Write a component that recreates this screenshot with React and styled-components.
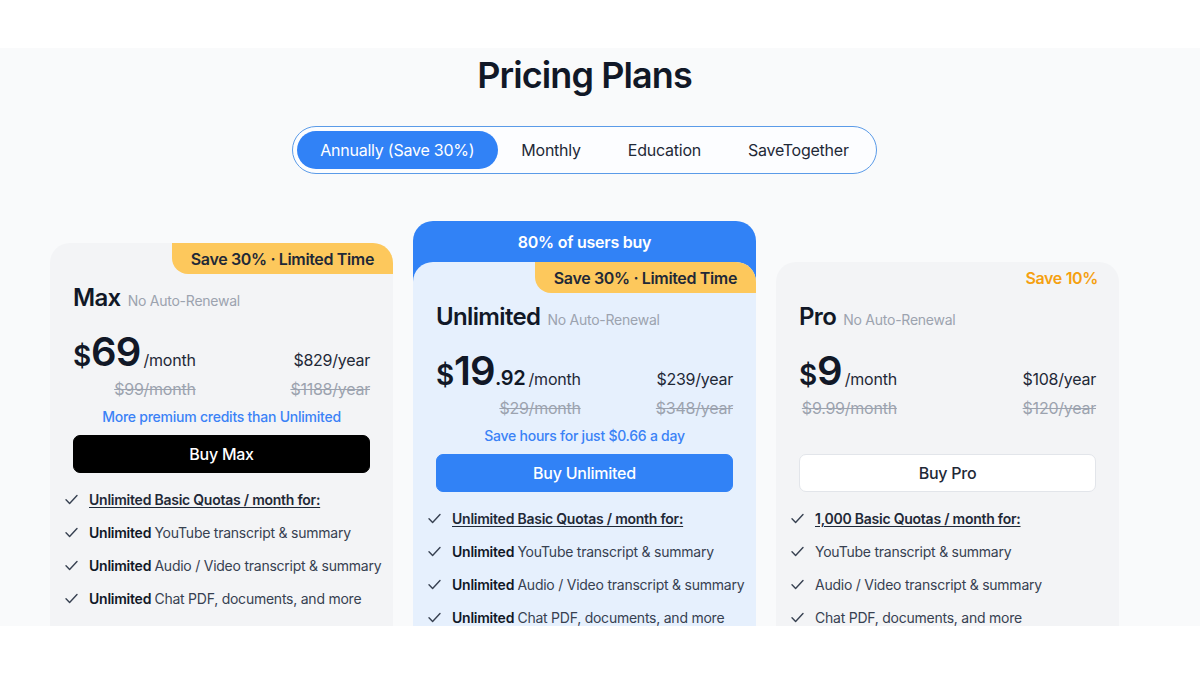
import React from 'react'
import styled, { createGlobalStyle } from 'styled-components'

const GlobalStyle = createGlobalStyle`
  body {
    margin: 0;
    background: #ffffff;
    font-family: Inter, "Noto Sans", sans-serif;
    letter-spacing: -0.015em;
  }
  * { box-sizing: border-box; }
`

const Page = styled.div`
  padding-top: 48px;
`

const Section = styled.section`
  height: 578px;
  overflow: hidden;
  background: #f9fafb;
  padding-right: 31px;
  display: flex;
  flex-direction: column;
  align-items: center;
`

const Title = styled.h1`
  margin: 5px 0 0;
  font-size: 36px;
  line-height: 44px;
  font-weight: 600;
  letter-spacing: -0.025em;
  color: #111827;
`

const Toggle = styled.div`
  margin-top: 29px;
  display: flex;
  padding: 4px;
  border: 1px solid #5b9be8;
  border-radius: 999px;
  background: #fcfdff;
`

const Tab = styled.button`
  height: 38px;
  padding: 0 23.5px;
  border: 0;
  border-radius: 999px;
  font-family: inherit;
  font-size: 16px;
  letter-spacing: inherit;
  cursor: pointer;
  background: ${p => (p.$active ? '#3182f6' : 'transparent')};
  color: ${p => (p.$active ? '#ffffff' : '#1f2937')};
`

const Cards = styled.div`
  margin-top: 47px;
  display: flex;
  gap: 20px;
  align-items: flex-start;
`

const Card = styled.div`
  width: 343px;
  min-height: 600px;
  margin-top: ${p => p.$offset || 0}px;
  background: ${p => p.$bg || '#f3f4f6'};
  border-radius: 20px 20px 0 0;
`

const Popular = styled.div`
  width: 343px;
  background: #3182f6;
  border-radius: 20px 20px 0 0;
`

const PopularHead = styled.div`
  height: 41px;
  display: flex;
  align-items: center;
  justify-content: center;
  color: #ffffff;
  font-size: 16px;
  font-weight: 600;
`

const BadgeRow = styled.div`
  display: flex;
  justify-content: flex-end;
  height: 31px;
`

const Badge = styled.div`
  padding: 0 ${p => (p.$plain ? 21 : 19)}px;
  display: flex;
  align-items: center;
  font-size: 16px;
  font-weight: 600;
  letter-spacing: -0.022em;
  color: ${p => (p.$plain ? '#f5a00f' : '#1f2937')};
  background: ${p => (p.$plain ? 'transparent' : '#fdc85c')};
  border-radius: 0 20px 0 16px;
`

const Body = styled.div`
  padding: 0 23px;
`

const Header = styled.div`
  margin-top: 8px;
  height: 32px;
  display: flex;
  align-items: baseline;
  gap: 7px;
`

const Name = styled.span`
  font-size: 24px;
  line-height: 32px;
  font-weight: 600;
  letter-spacing: -0.027em;
  color: #111827;
`

const NoRenew = styled.span`
  font-size: 14px;
  color: #9ca3af;
`

const Prices = styled.div`
  margin-top: 21px;
  display: grid;
  grid-template-columns: auto auto;
  justify-content: space-between;
  align-items: baseline;
  row-gap: 0;
`

const Big = styled.div`
  justify-self: end;
  display: flex;
  align-items: baseline;
  line-height: 34px;
  color: #111827;
  font-weight: 600;
`

const Dollar = styled.span`
  font-size: 28px;
`

const Amount = styled.span`
  font-size: 40px;
  letter-spacing: -0.02em;
`

const Cents = styled.span`
  font-size: 20px;
`

const Per = styled.span`
  margin-left: 3px;
  font-size: 16px;
  font-weight: 400;
  color: #1f2937;
`

const Year = styled.span`
  justify-self: end;
  font-size: 16px;
  line-height: 24px;
  color: #1f2937;
`

const Strike = styled.span`
  justify-self: end;
  font-size: 16px;
  line-height: 24px;
  color: #9ca3af;
  text-decoration: line-through;
`

const Note = styled.div`
  margin-top: 6px;
  height: 20px;
  text-align: center;
  font-size: 14px;
  line-height: 20px;
  font-weight: 500;
  color: #3b82f6;
`

const BuyButton = styled.button`
  margin-top: 8px;
  width: 100%;
  height: 38px;
  border-radius: 7px;
  font-family: inherit;
  font-size: 16px;
  font-weight: 500;
  letter-spacing: inherit;
  cursor: pointer;
  background: ${p => p.$bg};
  color: ${p => p.$fg};
  border: 1px solid ${p => p.$border || p.$bg};
`

const Features = styled.ul`
  list-style: none;
  margin: 10px 0 0;
  padding: 0 0 0 15px;
`

const Feature = styled.li`
  height: 33px;
  display: flex;
  align-items: center;
  gap: 11px;
  font-size: 14px;
  color: #374151;

  b {
    font-weight: 600;
    color: #111827;
  }
`

const Lead = styled.span`
  font-weight: 600;
  color: #1f2937;
  text-decoration: underline;
  text-underline-offset: 2px;
`

const Check = () => (
  <svg width="13" height="11" viewBox="0 0 13 11" fill="none">
    <path d="M1 5.8 L4.6 9.4 L12 1.4" stroke="#374151" strokeWidth="1.4" strokeLinecap="round" strokeLinejoin="round" />
  </svg>
)

const tabs = ['Annually (Save 30%)', 'Monthly', 'Education', 'SaveTogether']

const PlanBody = ({ plan }) => (
  <>
    <BadgeRow>
      <Badge $plain={plan.plainBadge}>{plan.badge}</Badge>
    </BadgeRow>
    <Body>
      <Header>
        <Name>{plan.name}</Name>
        <NoRenew>No Auto-Renewal</NoRenew>
      </Header>
      <Prices>
        <Big>
          <Dollar>$</Dollar>
          <Amount>{plan.amount}</Amount>
          {plan.cents && <Cents>{plan.cents}</Cents>}
          <Per>/month</Per>
        </Big>
        <Year>{plan.year}</Year>
        <Strike>{plan.oldMonth}</Strike>
        <Strike>{plan.oldYear}</Strike>
      </Prices>
      <Note>{plan.note || '\u00a0'}</Note>
      <BuyButton $bg={plan.btnBg} $fg={plan.btnFg} $border={plan.btnBorder}>
        {plan.button}
      </BuyButton>
    </Body>
    <Features>
      <Feature>
        <Check />
        <Lead>{plan.quota}</Lead>
      </Feature>
      {['YouTube transcript & summary', 'Audio / Video transcript & summary', 'Chat PDF, documents, and more'].map(f => (
        <Feature key={f}>
          <Check />
          <span>
            {plan.unlimited && <b>Unlimited </b>}
            {f}
          </span>
        </Feature>
      ))}
    </Features>
  </>
)

const max = {
  badge: 'Save 30% · Limited Time',
  name: 'Max',
  amount: '69',
  year: '$829/year',
  oldMonth: '$99/month',
  oldYear: '$1188/year',
  note: 'More premium credits than Unlimited',
  button: 'Buy Max',
  btnBg: '#000000',
  btnFg: '#ffffff',
  quota: 'Unlimited Basic Quotas / month for:',
  unlimited: true,
}

const unlimited = {
  badge: 'Save 30% · Limited Time',
  name: 'Unlimited',
  amount: '19',
  cents: '.92',
  year: '$239/year',
  oldMonth: '$29/month',
  oldYear: '$348/year',
  note: 'Save hours for just $0.66 a day',
  button: 'Buy Unlimited',
  btnBg: '#3182f6',
  btnFg: '#ffffff',
  quota: 'Unlimited Basic Quotas / month for:',
  unlimited: true,
}

const pro = {
  badge: 'Save 10%',
  plainBadge: true,
  name: 'Pro',
  amount: '9',
  year: '$108/year',
  oldMonth: '$9.99/month',
  oldYear: '$120/year',
  button: 'Buy Pro',
  btnBg: '#ffffff',
  btnFg: '#1f2937',
  btnBorder: '#e2e5ea',
  quota: '1,000 Basic Quotas / month for:',
}

const App = () => {
  return (
    <Page>
      <GlobalStyle />
      <Section>
        <Title>Pricing Plans</Title>
        <Toggle>
          {tabs.map((t, i) => (
            <Tab key={t} $active={i === 0}>{t}</Tab>
          ))}
        </Toggle>
        <Cards>
          <Card $offset={22}>
            <PlanBody plan={max} />
          </Card>
          <Popular>
            <PopularHead>80% of users buy</PopularHead>
            <Card $bg="#e6f0fd">
              <PlanBody plan={unlimited} />
            </Card>
          </Popular>
          <Card $offset={41}>
            <PlanBody plan={pro} />
          </Card>
        </Cards>
      </Section>
    </Page>
  )
}

export default App
